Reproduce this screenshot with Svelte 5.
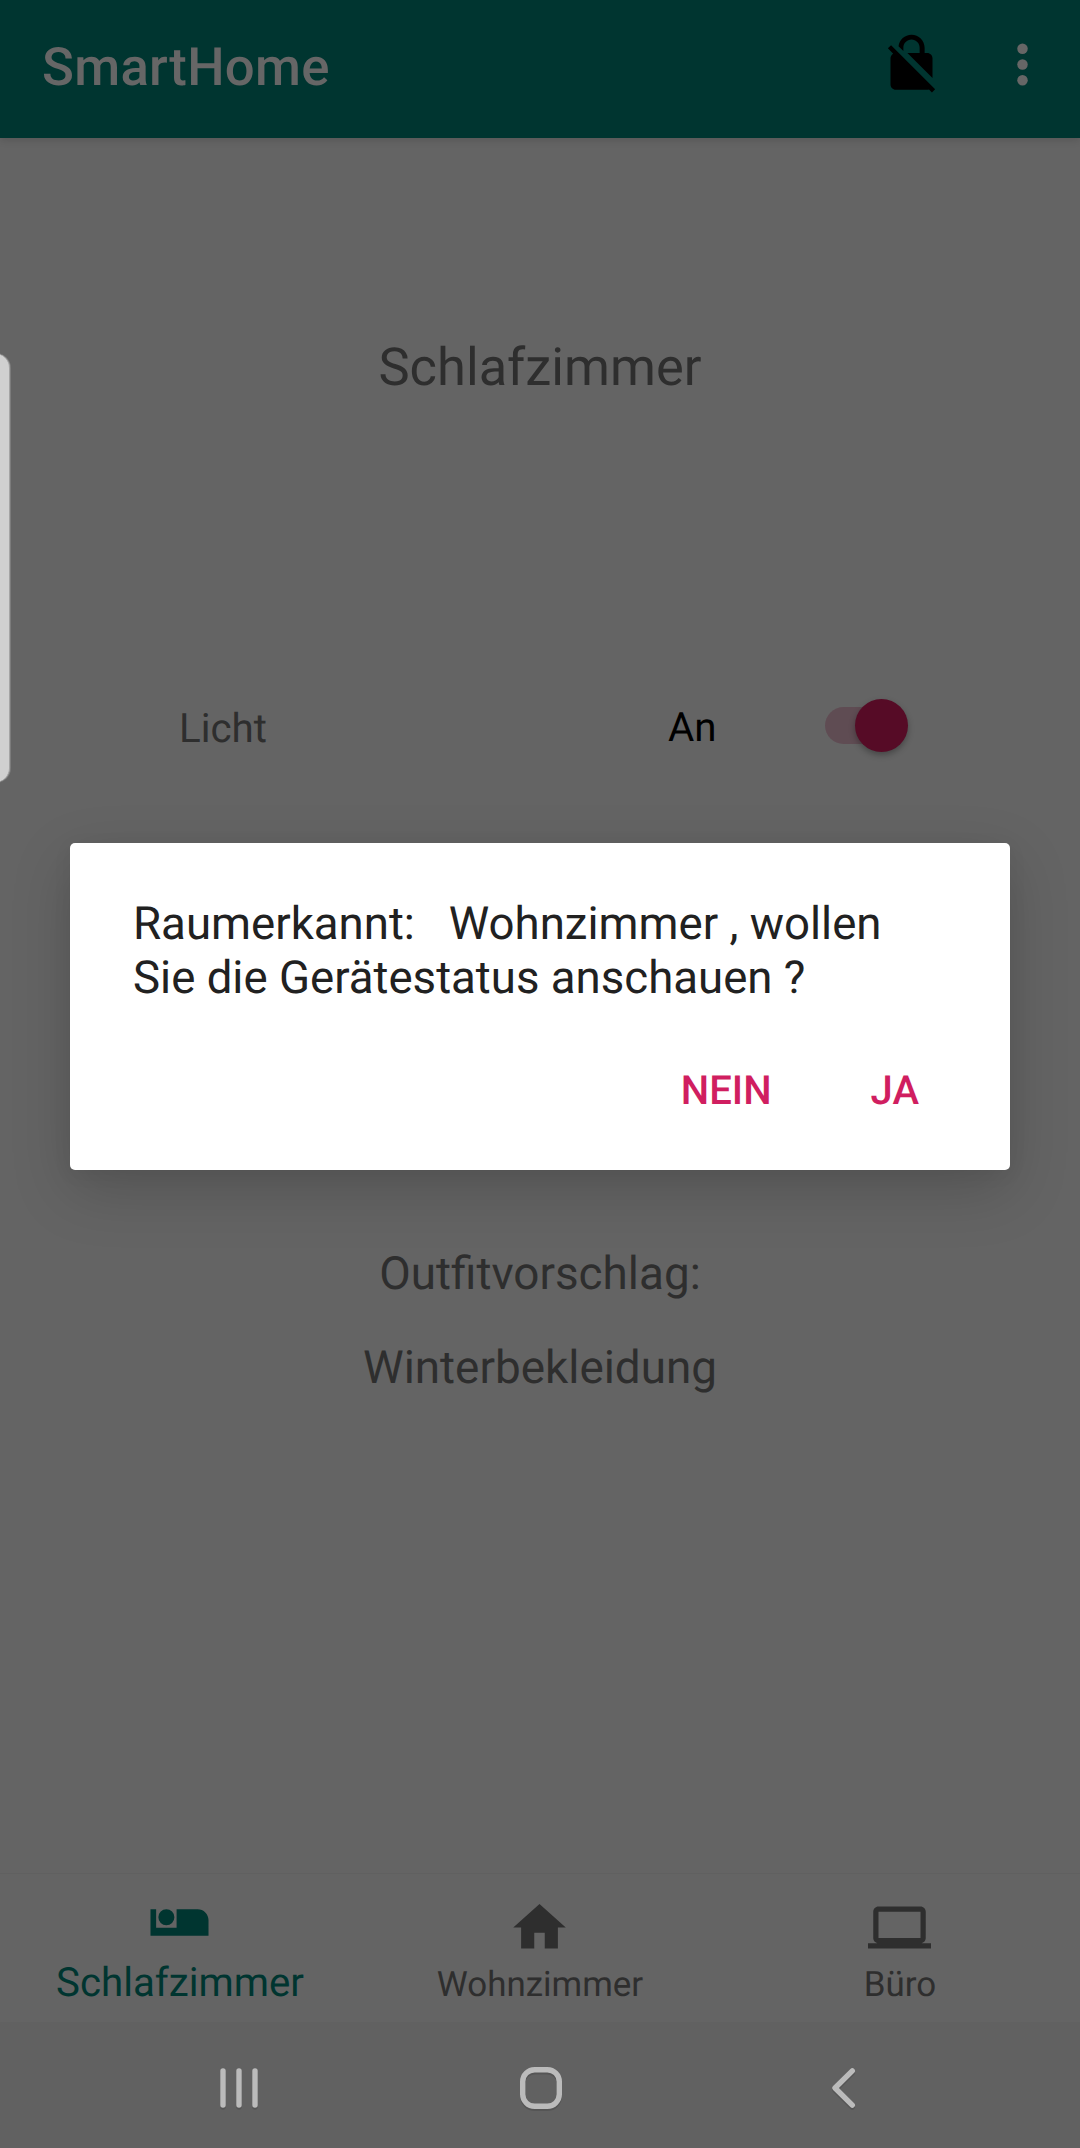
<script lang="ts">
  const tabs = [
    {
      label: 'Schlafzimmer',
      active: true,
      icon: 'M.95 5H3.1v7.1h7.8V5h8c2.3 0 4.15 1.85 4.15 4.15v6H.95zM3.95 8.1a3.05 3.05 0 1 1 6.1 0a3.05 3.05 0 1 1-6.1 0z',
    },
    { label: 'Wohnzimmer', active: false, icon: 'M10 20v-6h4v6h5v-8h3L12 3 2 12h3v8z' },
    {
      label: 'Büro',
      active: false,
      icon: 'M20 18c1.1 0 1.99-.9 1.99-2L22 6c0-1.1-.9-2-2-2H4c-1.1 0-2 .9-2 2v10c0 1.1.9 2 2 2H0v2h24v-2h-4zM4 6h16v10H4V6z',
    },
  ];
</script>

<div class="screen">
  <header class="appbar">
    <h1>SmartHome</h1>
    <svg class="lock" viewBox="0 0 24 24"><path d="M21 21.78L4.22 5 3 6.22l2.04 2.04C4.42 8.6 4 9.25 4 10v10c0 1.1.9 2 2 2h12c.23 0 .45-.05.66-.12L19.78 23 21 21.78zM8.9 6c0-1.71 1.39-3.1 3.1-3.1s3.1 1.39 3.1 3.1v2h-4.66L20 17.56V10c0-1.1-.9-2-2-2h-1V6c0-2.76-2.24-5-5-5-2.56 0-4.64 1.93-4.94 4.4L8.9 7.24V6z" /></svg>
    <svg class="more" viewBox="0 0 24 24"><circle cx="12" cy="6" r="2" /><circle cx="12" cy="12" r="2" /><circle cx="12" cy="18" r="2" /></svg>
  </header>

  <main>
    <h2>Schlafzimmer</h2>
    <div class="light">
      <span class="name">Licht</span>
      <span class="state">An</span>
      <span class="switch"><span class="thumb"></span></span>
    </div>
    <div class="outfit">
      <p>Outfitvorschlag:</p>
      <p>Winterbekleidung</p>
    </div>
  </main>

  <nav class="tabs">
    {#each tabs as tab}
      <div class="tab" class:active={tab.active}>
        <svg viewBox="0 0 24 24"><path d={tab.icon} /></svg>
        <span>{tab.label}</span>
      </div>
    {/each}
  </nav>

  <footer class="system">
    <svg viewBox="0 0 1080 126">
      <g class="shade" transform="translate(0 2)">
        <path d="M223 49v34M239 49v34M255 49v34" />
        <rect x="522.7" y="47.7" width="36.6" height="36.6" rx="12" />
        <path d="M852.3 48.8L835 66l17.3 17.2" />
      </g>
      <g class="glyphs">
        <path d="M223 49v34M239 49v34M255 49v34" />
        <rect x="522.7" y="47.7" width="36.6" height="36.6" rx="12" />
        <path d="M852.3 48.8L835 66l17.3 17.2" />
      </g>
    </svg>
  </footer>

  <div class="edge"></div>

  <div class="dialog">
    <p>Raumerkannt:&nbsp;&nbsp; Wohnzimmer , wollen<br />Sie die Gerätestatus anschauen ?</p>
    <div class="actions">
      <span>NEIN</span>
      <span>JA</span>
    </div>
  </div>
</div>

<style>
  :global(body) {
    background: #646464;
  }
  .screen {
    position: relative;
    display: flex;
    flex-direction: column;
    width: 1080px;
    height: 2148px;
    overflow: hidden;
    background: #646464;
    font-family: Roboto, 'Liberation Sans', sans-serif;
    color: #2e2e2e;
    text-rendering: geometricPrecision;
  }
  h1,
  h2,
  p {
    margin: 0;
    font-weight: 400;
  }
  .appbar {
    display: flex;
    align-items: flex-start;
    box-sizing: border-box;
    height: 138px;
    padding: 32px 26px 0 42px;
    background: #003530;
    box-shadow: 0 2px 8px rgba(0, 0, 0, 0.14);
  }
  h1 {
    flex: 1;
    padding-top: 5px;
    font-size: 52.7px;
    line-height: 60px;
    font-weight: 500;
    letter-spacing: 0.3px;
    color: #666;
  }
  .appbar svg {
    width: 63px;
    height: 63px;
  }
  .lock {
    margin-right: 48.5px;
    fill: #000;
  }
  .more {
    padding-top: 1px;
    fill: #666;
  }
  main {
    flex: 1;
    padding-top: 199px;
  }
  h2 {
    font-size: 52.4px;
    line-height: 60px;
    text-align: center;
  }
  .light {
    display: grid;
    grid-template-columns: 489px 157px 83px;
    align-items: start;
    height: 60px;
    padding: 300px 0 0 179px;
    font-size: 40.3px;
    line-height: 48px;
  }
  .name {
    padding-top: 8px;
  }
  .state {
    padding-top: 7px;
    color: #000;
  }
  .switch {
    display: flex;
    justify-content: flex-end;
    align-items: center;
    width: 83px;
    height: 37px;
    margin-top: 10px;
    border-radius: 19px;
    background: linear-gradient(90deg, #5f4c53 60px, transparent 60px);
  }
  .thumb {
    width: 53px;
    height: 53px;
    border-radius: 50%;
    background: #560b26;
    box-shadow: 0 3px 6px rgba(0, 0, 0, 0.3);
  }
  .outfit {
    display: grid;
    gap: 40px;
    padding-top: 490px;
    font-size: 45.85px;
    line-height: 54px;
    text-align: center;
  }
  .tabs {
    display: grid;
    grid-template-columns: repeat(3, 1fr);
    box-sizing: border-box;
    height: 149px;
    border-top: 1px solid #606060;
    background: #646464;
  }
  .tab {
    display: flex;
    flex-direction: column;
    align-items: center;
    padding-top: 22px;
    font-size: 34.95px;
    line-height: 40px;
  }
  .tab svg {
    width: 63px;
    height: 63px;
    margin: 0 1px 6px 0;
    fill: #2e2e2e;
  }
  .tab.active {
    font-size: 40.2px;
    line-height: 48px;
    color: #003530;
  }
  .tab.active svg {
    margin-bottom: 0;
    fill: #003530;
  }
  .system {
    height: 126px;
    background: #616161;
  }
  .system svg {
    display: block;
    width: 1080px;
    height: 126px;
    fill: none;
    stroke-width: 5.4;
    stroke-linecap: round;
    stroke-linejoin: round;
  }
  .shade {
    stroke: rgba(0, 0, 0, 0.12);
  }
  .glyphs {
    stroke: #bbb;
  }
  .edge {
    position: absolute;
    left: -20px;
    top: 354px;
    box-sizing: border-box;
    width: 30px;
    height: 428px;
    border-right: 1px solid #a4a4a4;
    border-radius: 14px;
    background: #d0d0d0;
    box-shadow: 0 0 0 1px #7c7c7c;
  }
  .dialog {
    position: absolute;
    left: 70px;
    top: 843px;
    box-sizing: border-box;
    width: 940px;
    height: 327px;
    padding: 55px 63px 0;
    border-radius: 5px;
    background: #fff;
    color: #212121;
    font-size: 45.6px;
    line-height: 54px;
    box-shadow:
      0 20px 60px rgba(0, 0, 0, 0.17),
      0 4px 20px rgba(0, 0, 0, 0.05);
  }
  .dialog p {
    white-space: nowrap;
  }
  .actions {
    display: flex;
    justify-content: flex-end;
    gap: 99px;
    padding: 61px 28px 0 0;
    font-size: 40.1px;
    line-height: 48px;
    font-weight: 500;
    color: #d01e60;
  }
</style>
